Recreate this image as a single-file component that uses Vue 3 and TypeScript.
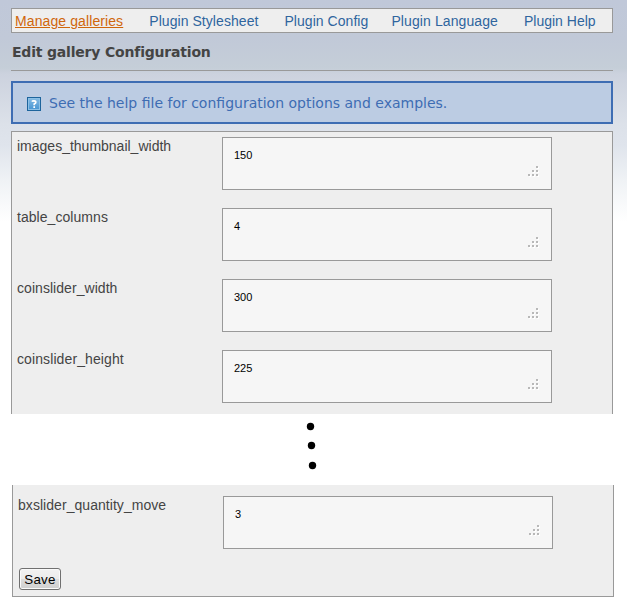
<script setup lang="ts">
import { ref } from 'vue'

interface Setting {
  name: string
  value: string
}

const links = [
  { label: 'Manage galleries', key: 'galleries' },
  { label: 'Plugin Stylesheet', key: 'stylesheet' },
  { label: 'Plugin Config', key: 'config' },
  { label: 'Plugin Language', key: 'language' },
  { label: 'Plugin Help', key: 'help' },
]
const current = ref('galleries')

const settings = ref<Setting[]>([
  { name: 'images_thumbnail_width', value: '150' },
  { name: 'table_columns', value: '4' },
  { name: 'coinslider_width', value: '300' },
  { name: 'coinslider_height', value: '225' },
])
const lastSettings = ref<Setting[]>([{ name: 'bxslider_quantity_move', value: '3' }])
</script>

<template>
  <main class="page">
    <nav class="tabs">
      <a
        v-for="link in links"
        :key="link.key"
        :class="['tab', link.key, { active: current === link.key }]"
        @click="current = link.key"
      >{{ link.label }}</a>
    </nav>

    <h1 class="title">Edit gallery Configuration</h1>

    <div class="notice">
      <svg class="help-icon" width="14" height="14" viewBox="0 0 14 14">
        <defs>
          <linearGradient id="help-fill" x1="0" y1="0" x2="0" y2="1">
            <stop offset="0" stop-color="#80b8e2" />
            <stop offset="1" stop-color="#4c98d4" />
          </linearGradient>
        </defs>
        <rect x="0.5" y="0.5" width="13" height="13" fill="#8cc0e6" stroke="#1d649c" />
        <rect x="2" y="2" width="10" height="10" fill="url(#help-fill)" />
        <path d="M5 4.6Q5.3 3.8 7 3.8Q8.8 3.8 8.8 5.2Q8.8 6.2 7.2 7V8.2M7.2 9.2V11" fill="none" stroke="#fff" stroke-width="1.7" />
      </svg>
      <span class="notice-text">See the help file for configuration options and examples.</span>
    </div>

    <section class="panel upper">
      <label v-for="s in settings" :key="s.name" :class="['row', s.name]">
        <span class="name">{{ s.name }}</span>
        <span class="field">
          <textarea v-model="s.value" class="value" spellcheck="false"></textarea>
          <svg class="grip" width="11" height="11" viewBox="0 0 11 11" shape-rendering="crispEdges">
            <path d="M9 1h2v2H9zM5 5h2v2H5zM9 5h2v2H9zM1 9h2v2H1zM5 9h2v2H5zM9 9h2v2H9z" fill="#fff" />
            <path d="M8 0h2v2H8zM4 4h2v2H4zM8 4h2v2H8zM0 8h2v2H0zM4 8h2v2H4zM8 8h2v2H8z" fill="#b8b8b8" />
          </svg>
        </span>
      </label>
    </section>

    <div class="gap">
      <svg width="20" height="60" viewBox="0 0 20 60">
        <circle cx="8.5" cy="8.5" r="3.7" />
        <circle cx="9.5" cy="27.5" r="3.7" />
        <circle cx="10.5" cy="47.5" r="3.7" />
      </svg>
    </div>

    <section class="panel lower">
      <label v-for="s in lastSettings" :key="s.name" :class="['row', s.name]">
        <span class="name">{{ s.name }}</span>
        <span class="field">
          <textarea v-model="s.value" class="value" spellcheck="false"></textarea>
          <svg class="grip" width="11" height="11" viewBox="0 0 11 11" shape-rendering="crispEdges">
            <path d="M9 1h2v2H9zM5 5h2v2H5zM9 5h2v2H9zM1 9h2v2H1zM5 9h2v2H5zM9 9h2v2H9z" fill="#fff" />
            <path d="M8 0h2v2H8zM4 4h2v2H4zM8 4h2v2H8zM0 8h2v2H0zM4 8h2v2H4zM8 8h2v2H8z" fill="#b8b8b8" />
          </svg>
        </span>
      </label>
      <button class="save" type="button">Save</button>
    </section>
  </main>
</template>

<style>
body {
  background: #fff;
}
</style>

<style scoped>
.page {
  box-sizing: border-box;
  width: 627px;
  height: 606px;
  padding: 8px 13px 0 11px;
  overflow: hidden;
  background: linear-gradient(#c0c8d9 0, #c1c9d8 38px, #c5ced8 68px, #ccd2de 74px, #dce1e9 124px, #dfe4ec 145px, #eff2f5 180px, #fff 222px);
  font-family: "Liberation Sans", Arial, sans-serif;
  font-size: 14px;
  color: #444;
}
.tabs {
  box-sizing: border-box;
  display: flex;
  gap: 26px;
  width: 602px;
  height: 25px;
  padding: 1px 0 0 3px;
  border: 1px solid #999;
  background: #eee;
  line-height: 23px;
  white-space: nowrap;
}
.tab {
  color: #2f659e;
  cursor: pointer;
}
.galleries {
  letter-spacing: 0.1px;
}
.stylesheet {
  letter-spacing: 0.06px;
}
.config {
  letter-spacing: 0.05px;
}
.language {
  margin-left: -3px;
  letter-spacing: 0.1px;
}
.active {
  color: #d0660c;
  text-decoration: underline;
}
.title {
  box-sizing: border-box;
  width: 602px;
  height: 38px;
  margin: 0 0 10px;
  padding: 9px 0 0 1px;
  border-bottom: 1px solid #999;
  font: bold 14px/20px "DejaVu Sans", Verdana, sans-serif;
  letter-spacing: -0.19px;
  color: #444;
}
.notice {
  box-sizing: border-box;
  display: flex;
  align-items: center;
  gap: 8px;
  width: 602px;
  height: 43px;
  margin-bottom: 7px;
  padding-left: 14px;
  border: 2px solid #3e6db3;
  background: #bccce3;
  color: #3e6db3;
  font: 14px/20px "DejaVu Sans", Verdana, sans-serif;
  white-space: nowrap;
}
.help-icon {
  flex: none;
  margin-top: 3px;
}
.panel {
  box-sizing: border-box;
  width: 602px;
  border: 1px solid #999;
  background: #eee;
}
.upper {
  height: 283px;
  padding: 5px 0 0 5px;
  border-bottom: 0;
}
.lower {
  height: 112px;
  margin-left: 1px;
  padding: 11px 0 0 5px;
  border-top: 0;
}
.row {
  display: flex;
  height: 71px;
}
.name {
  width: 205px;
  line-height: 18px;
  letter-spacing: 0.05px;
}
.images_thumbnail_width .name {
  letter-spacing: 0;
}
.coinslider_height .name {
  letter-spacing: 0.1px;
}
.field {
  position: relative;
  width: 330px;
  height: 53px;
}
.value {
  box-sizing: border-box;
  display: block;
  width: 330px;
  height: 53px;
  margin: 0;
  padding: 10px 11px 11px;
  border: 1px solid #999;
  border-radius: 0;
  outline: 0;
  background: #f6f6f6;
  color: #000;
  font: 11px/14px "Liberation Sans", Arial, sans-serif;
  resize: none;
  overflow: hidden;
}
.grip {
  position: absolute;
  right: 13px;
  bottom: 13px;
}
.gap {
  width: 627px;
  height: 71px;
  margin-left: -11px;
  background: #fff;
}
.gap svg {
  display: block;
  margin-left: 302px;
  padding-top: 4px;
}
.save {
  box-sizing: border-box;
  display: block;
  width: 42px;
  height: 22px;
  margin: 1px 0 0 1px;
  padding: 1px 0 0;
  border: 1px solid #707070;
  border-radius: 3px;
  background: linear-gradient(#f2f2f2 0, #ebebeb 50%, #ddd 50%, #cfcfcf 100%);
  box-shadow: inset 0 0 0 1px #fafafa;
  color: #000;
  font: 13.33px/19px "Liberation Sans", Arial, sans-serif;
  letter-spacing: 0.3px;
}
</style>
